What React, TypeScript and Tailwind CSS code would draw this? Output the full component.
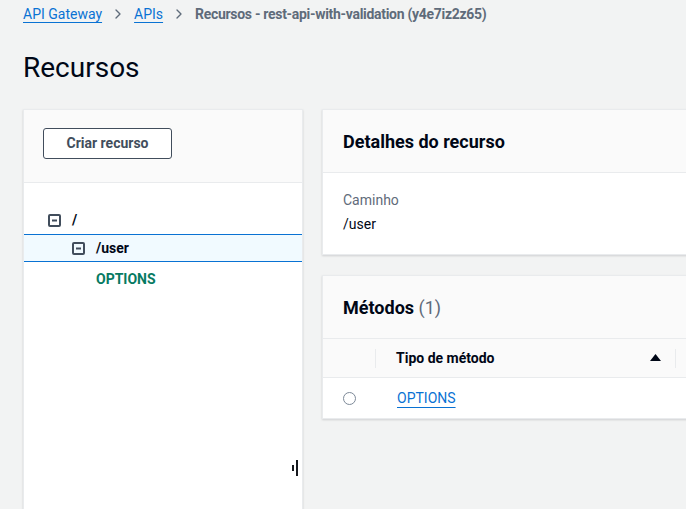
import { ChevronRight } from "lucide-react"

function MinusBox() {
  return (
    <svg width="13" height="13" viewBox="0 0 13 13" className="shrink-0">
      <rect x="1" y="1" width="11" height="11" rx="1" fill="none" stroke="#414d5c" strokeWidth="2" />
      <line x1="4" y1="6.5" x2="9" y2="6.5" stroke="#414d5c" strokeWidth="2" />
    </svg>
  )
}

function Breadcrumbs() {
  return (
    <nav className="flex items-center h-[28px] px-[23px] text-[14px]">
      <a className="text-[#0972d3] underline underline-offset-[3px] decoration-1">API Gateway</a>
      <ChevronRight className="mx-[8px] h-[16px] w-[16px] text-[#5f6b7a]" strokeWidth={2} />
      <a className="text-[#0972d3] underline underline-offset-[3px] decoration-1">APIs</a>
      <ChevronRight className="mx-[8px] h-[16px] w-[16px] text-[#5f6b7a]" strokeWidth={2} />
      <span className="font-bold text-[#5f6b7a] tracking-[-0.3px]">Recursos - rest-api-with-validation (y4e7iz2z65)</span>
    </nav>
  )
}

function ResourceTree() {
  return (
    <div className="relative w-[280px] shrink-0 h-[420px] bg-white border border-[#e9ebed] shadow-[0_1px_2px_rgba(0,7,22,0.15)]">
      <div className="h-[73px] bg-[#fafafa] border-b border-[#e9ebed] px-[19px] pt-[18px]">
        <button className="h-[31px] w-[129px] border border-[#414d5c] rounded-[3px] bg-white text-[14px] font-bold text-[#414d5c]">
          Criar recurso
        </button>
      </div>
      <div className="pt-[23px] text-[14px] font-bold text-[#000716]">
        <div className="flex items-center gap-[11px] h-[28px] pl-[24px]">
          <MinusBox />
          <span>/</span>
        </div>
        <div className="flex items-center gap-[11px] h-[28px] pl-[48px] bg-[#f1faff] border-y border-[#0972d3]">
          <MinusBox />
          <span>/user</span>
        </div>
        <div className="flex items-center h-[34px] pl-[72px] text-[#067a62]">OPTIONS</div>
      </div>
      <div className="absolute right-[4px] top-[350px] flex items-center gap-[2px]">
        <div className="w-[2px] h-[6px] bg-[#16191f]" />
        <div className="w-[2px] h-[16px] bg-[#16191f]" />
      </div>
    </div>
  )
}

function ResourceDetails() {
  return (
    <div className="bg-white border border-[#e9ebed] shadow-[0_1px_2px_rgba(0,7,22,0.15)]">
      <div className="h-[63px] bg-[#fafafa] border-b border-[#e9ebed] flex items-center px-[20px]">
        <h2 className="text-[18px] font-bold text-[#000716]">Detalhes do recurso</h2>
      </div>
      <div className="px-[20px] pt-[15px] pb-[18px] text-[14px] leading-[24px]">
        <div className="text-[#5f6b7a]">Caminho</div>
        <div className="text-[#000716]">/user</div>
      </div>
    </div>
  )
}

function Methods() {
  return (
    <div className="bg-white border border-[#e9ebed] shadow-[0_1px_2px_rgba(0,7,22,0.15)]">
      <div className="h-[62px] bg-[#fafafa] flex items-center px-[20px]">
        <h2 className="text-[18px] font-bold text-[#000716]">
          Métodos <span className="font-normal text-[#5f6b7a]">(1)</span>
        </h2>
      </div>
      <div className="flex items-center h-[40px] bg-[#fafafa] border-y border-[#e9ebed] text-[14px] font-bold text-[#000716]">
        <div className="w-[53px] flex justify-end">
          <div className="w-px h-[19px] bg-[#e9ebed]" />
        </div>
        <div className="w-[299px] flex items-center justify-between pl-[20px] pr-[14px]">
          <span>Tipo de método</span>
          <svg width="11" height="8" viewBox="0 0 11 8">
            <path d="M5.5 0 L11 7 L0 7 Z" fill="#000716" />
          </svg>
        </div>
        <div className="w-px h-[19px] bg-[#e9ebed]" />
      </div>
      <div className="flex items-center h-[40px] text-[14px]">
        <div className="w-[53px] pl-[20px]">
          <div className="w-[13px] h-[13px] rounded-full border border-[#7d8998]" />
        </div>
        <a className="pl-[21px] text-[#0972d3] underline underline-offset-[4px] decoration-1">OPTIONS</a>
      </div>
    </div>
  )
}

export default function App() {
  return (
    <div className="w-[686px] h-[509px] overflow-hidden bg-[#f2f3f3] font-['Roboto',sans-serif] text-[#000716]">
      <Breadcrumbs />
      <h1 className="px-[23px] pt-[20px] text-[28px] leading-[40px] text-[#000716]">Recursos</h1>
      <div className="flex gap-[19px] pl-[23px] mt-[21px]">
        <ResourceTree />
        <div className="flex flex-col gap-[20px] w-[400px] shrink-0">
          <ResourceDetails />
          <Methods />
        </div>
      </div>
    </div>
  )
}
